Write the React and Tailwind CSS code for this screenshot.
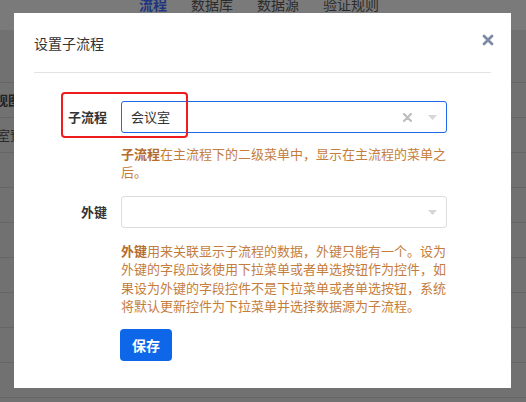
const font = { fontFamily: '"Noto Sans CJK SC", "Noto Sans", sans-serif' };

const CloseIcon = () => (
  <svg width="12" height="12" viewBox="0 0 12 12" className="text-[#7d8ba5]">
    <path d="M2 2L10 10M10 2L2 10" stroke="currentColor" strokeWidth="2.8" strokeLinecap="round" />
  </svg>
);

const Caret = () => (
  <svg width="9" height="5" viewBox="0 0 9 5">
    <path d="M0 0H9L4.5 5Z" fill="#d6d6d6" />
  </svg>
);

const Select = ({ value, active }) => (
  <div
    className={`flex h-[32px] items-center rounded-[3px] border bg-white pl-[9px] pr-[9px] ${
      active ? "border-[#1d6be6]" : "border-[#dcdcdc]"
    }`}
  >
    <span className="flex-1 text-[13px] text-[#333]">{value}</span>
    {value && (
      <svg width="9" height="9" viewBox="0 0 9 9" className="mr-[16px]">
        <path d="M1 1L8 8M8 1L1 8" stroke="#bdbdbd" strokeWidth="2.2" strokeLinecap="round" />
      </svg>
    )}
    <Caret />
  </div>
);

export default function App() {
  return (
    <div className="relative h-[402px] w-[526px] overflow-hidden bg-[#717171]" style={font}>
      {/* page behind the mask */}
      <div className="flex h-[30px] items-start gap-6 bg-[#7a7a7a] pl-[139px]">
        <span className="-mt-[6px] text-[14px] font-bold leading-[20px] text-[#1f3580]">流程</span>
        <span className="-mt-[6px] text-[14px] leading-[20px] text-[#2c2c2c]">数据库</span>
        <span className="-mt-[6px] text-[14px] leading-[20px] text-[#2c2c2c]">数据源</span>
        <span className="-mt-[6px] text-[14px] leading-[20px] text-[#2c2c2c]">验证规则</span>
      </div>
      <div className="h-[53px] border-b border-[#656565]" />
      <div className="-ml-[5px] flex h-[35px] items-center border-b border-[#656565] text-[13px] font-bold text-[#222]">视图</div>
      <div className="-ml-[3px] flex h-[35px] items-center border-b border-[#656565] text-[13px] text-[#2a2a2a]">室预</div>
      {[0, 1, 2, 3, 4, 5, 6, 7].map((i) => (
        <div key={i} className="h-[35px] border-b border-[#656565]" />
      ))}

      {/* modal */}
      <div className="absolute left-[14px] top-[13px] h-[375px] w-[497px] bg-white">
        <div className="mx-[20px] flex h-[60px] items-start justify-between border-b border-[#e3e3e3] pt-[20px]">
          <span className="text-[14px] leading-[20px] text-[#333]">设置子流程</span>
          <span className="-mr-[3px] mt-[1px]">
            <CloseIcon />
          </span>
        </div>

        <div className="grid grid-cols-[73px_326px] gap-x-[14px] px-[20px] pt-[28px]">
          <div className="flex items-center justify-end text-[13px] font-bold text-[#333]">子流程</div>
          <Select value="会议室" active />
          <div />
          <p className="mt-[12px] text-[13px] leading-[17.5px] text-[#c47d3d]">
            <b className="font-bold text-[#b56c2c]">子流程</b>在主流程下的二级菜单中，显示在主流程的菜单之后。
          </p>

          <div className="mt-[16px] flex items-center justify-end text-[13px] font-bold text-[#333]">外键</div>
          <div className="mt-[16px]">
            <Select value="" />
          </div>
          <div />
          <p className="mt-[14px] text-[13px] leading-[18.3px] text-[#c47d3d]">
            <b className="font-bold text-[#b56c2c]">外键</b>用来关联显示子流程的数据，外键只能有一个。设为外键的字段应该使用下拉菜单或者单选按钮作为控件，如果设为外键的字段控件不是下拉菜单或者单选按钮，系统将默认更新控件为下拉菜单并选择数据源为子流程。
          </p>

          <div />
          <div className="mt-[14px]">
            <button className="-ml-px h-[32px] w-[52px] rounded-[4px] bg-[#0e67e8] text-[14px] font-bold text-white">
              保存
            </button>
          </div>
        </div>

        {/* red annotation box */}
        <div className="absolute left-[47px] top-[79px] h-[46px] w-[127px] rounded-[4px] border-2 border-[#ee1c1c]" />
      </div>
    </div>
  );
}
